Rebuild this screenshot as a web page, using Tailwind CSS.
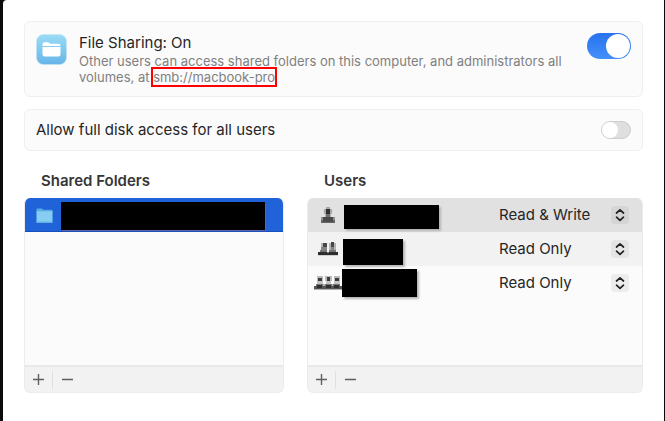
<!DOCTYPE html>
<html lang="en">

<head>
    <meta charset="UTF-8">
    <meta name="viewport" content="width=device-width, initial-scale=1.0">
    <title>File Sharing</title>
    <script src="https://cdn.jsdelivr.net/npm/@tailwindcss/browser@4"></script>
</head>

<body class="bg-[#0b0b0b] font-['Inter',sans-serif] text-[15px] leading-5 text-[#262626]">
    <main class="min-h-screen ml-[3px] mr-px px-[21px] pt-[21px] pb-7 bg-white rounded-tl-sm">
        <!-- File sharing switch -->
        <section class="flex items-start px-[11px] pt-[11px] pb-2 h-[76px] bg-[#fbfbfb] border border-[#efefef] rounded-md">
            <svg class="w-[31px] h-[31px] mt-px shrink-0" viewBox="0 0 31 31" aria-hidden="true">
                <defs>
                    <linearGradient id="tile" x1="0" y1="0" x2="0" y2="1">
                        <stop offset="0" stop-color="#9adcf6" />
                        <stop offset="1" stop-color="#66b5e8" />
                    </linearGradient>
                </defs>
                <rect x=".5" y=".5" width="30" height="30" rx="7" fill="url(#tile)" stroke="#c4e4f4" stroke-width=".6" />
                <path d="M6.500 12V10q0-1.800 1.800-1.800h3.400q.8 0 1.400.5l.8.7q.4.300 1 .300h7.800q1.800 0 1.800 1.800V12z" fill="#fff" />
                <path d="M6.500 13h18v7.500q0 2-2 2h-14q-2 0-2-2z" fill="#fff" />
            </svg>
            <div class="ml-3 flex-1">
                <label for="fileSharing" class="block">File Sharing: On</label>
                <p class="max-w-[490px] text-[13px] leading-4 text-[#808080]">Other users can access shared folders on this computer, and administrators all volumes, at <span class="outline-2 outline-[#ff0000]">smb://macbook-pro</span></p>
            </div>
            <input type="checkbox" id="fileSharing" checked
                class="appearance-none flex shrink-0 w-11 h-[26px] p-px rounded-full bg-linear-to-b from-[#2872ee] to-[#4390f9] justify-end before:size-6 before:rounded-full before:bg-white">
        </section>

        <!-- Full disk access -->
        <section class="flex items-center justify-between mt-3 px-[11px] h-[42px] bg-[#fbfbfb] border border-[#efefef] rounded-md">
            <label for="diskAccess">Allow full disk access for all users</label>
            <input type="checkbox" id="diskAccess"
                class="appearance-none flex items-center shrink-0 w-[30px] h-[18px] rounded-full bg-[#dfdfdf] border border-[#cecece] before:size-4 before:rounded-full before:bg-white">
        </section>

        <div class="grid grid-cols-[260fr_336fr] gap-x-[23px] mt-5">
            <!-- Shared folders -->
            <section>
                <h2 class="pl-[17px] font-semibold text-[#363636]">Shared Folders</h2>
                <div class="mt-[7px] bg-[#fbfbfb] rounded-md overflow-hidden border border-[#ececec] border-t-0">
                    <ul class="-mx-px h-[167px]">
                        <li class="flex items-center h-[34px] pl-3 bg-[#2062d8] inset-shadow-[0_-1px_0_#154fbd]">
                            <svg class="w-[17px] h-[17px]" viewBox="0 0 17 17" aria-hidden="true">
                                <path d="M.5 2.500q0-1 1-1h4q.6 0 1 .5l.6.700h8.400q1 0 1 1V6H.5z" fill="#56ade0" />
                                <rect x=".5" y="4.200" width="16" height="11.800" rx=".8" fill="#85cdf3" />
                                <path d="M.5 14.500h16V15q0 1-1 1h-14q-1 0-1-1z" fill="#62b3e2" />
                            </svg>
                            <span class="ml-2 mb-0.5 self-end w-[204px] h-7 bg-black shadow-[1px_1px_1px_#5c5faa]"></span>
                        </li>
                    </ul>
                    <div class="flex items-center h-[27px] bg-[#f2f2f2] border-t-2 border-[#e9e9e9]">
                        <button type="button" aria-label="Add folder" class="flex justify-center w-[27px]">
                            <svg class="w-[11px] h-[11px]" viewBox="0 0 11 11" stroke="#5f5f5f" stroke-width="1.400"><path d="M5.500 0v11M0 5.500h11" /></svg>
                        </button>
                        <span class="w-px h-[18px] bg-[#e0e0e0]"></span>
                        <button type="button" aria-label="Remove folder" class="flex justify-center w-7">
                            <svg class="w-[11px] h-[11px]" viewBox="0 0 11 11" stroke="#5f5f5f" stroke-width="1.400"><path d="M0 5.500h11" /></svg>
                        </button>
                    </div>
                </div>
            </section>

            <!-- Users -->
            <section>
                <h2 class="pl-[17px] font-semibold text-[#363636]">Users</h2>
                <div class="mt-[7px] bg-[#fbfbfb] rounded-md overflow-hidden border border-[#ececec] border-t-0">
                    <ul class="-mx-px h-[167px]">
                        <li class="flex items-center h-[34px] pl-[7px] pr-[14px] bg-[#e1e1e1]">
                            <svg class="w-7 h-4 shrink-0" viewBox="0 0 28 16" shape-rendering="crispEdges" aria-hidden="true">
                                <path d="M12 0h4v2h-4z" fill="#aaa" />
                                <path d="M10 2h8v5h-8z" fill="#a6a6a6" />
                                <path d="M12 2h4v5h-4z" fill="#303030" />
                                <path d="M11 7h6v3h-6z" fill="#b4b4b4" />
                                <path d="M12 7h4v3h-4z" fill="#6c6c6c" />
                                <path d="M7 10h14v3H7z" fill="#929292" />
                                <path d="M9 10h10v3H9z" fill="#484848" />
                                <path d="M7 13h14v3H7z" fill="#666" />
                                <path d="M9 13h10v2H9z" fill="#4c4c4c" />
                            </svg>
                            <span class="ml-0.5 mb-[3px] self-end w-[95px] h-6 bg-black shadow-[2px_2px_2px_#b5b5b5]"></span>
                            <div class="relative ml-auto w-[130px]">
                                <select aria-label="First user access" class="appearance-none block w-full outline-none">
                                    <option>Read &amp; Write</option>
                                    <option>Read Only</option>
                                </select>
                                <svg class="absolute right-0 top-px w-[18px] h-[18px] rounded-sm bg-[#d5d5d5] pointer-events-none" viewBox="0 0 18 18" fill="none" stroke="#222" stroke-width="1.700" stroke-linecap="round" stroke-linejoin="round"><path d="M5.500 7 9 3.800 12.500 7M5.500 11.200 9 14.400l3.500-3.200" /></svg>
                            </div>
                        </li>
                        <li class="flex items-center h-[34px] pl-[7px] pr-[14px] bg-[#f2f2f2]">
                            <svg class="w-7 h-4 shrink-0" viewBox="0 0 28 16" shape-rendering="crispEdges" aria-hidden="true">
                                <path d="M7 2h6v8H7zM15 2h7v8h-7z" fill="#b4b4b4" />
                                <path d="M9 2h4v4H9zM17 1h3v5h-3z" fill="#484848" />
                                <path d="M7 6h6v3H7zM17 6h3v3h-3z" fill="#848484" />
                                <path d="M6 9h7v2H6zM15 9h7v2h-7z" fill="#777" />
                                <path d="M4 11h20v3H4z" fill="#2d2d2d" />
                                <path d="M13 11h2v1h-2z" fill="#888" />
                                <path d="M4 14h20v1H4z" fill="#d0d0d0" />
                            </svg>
                            <span class="ml-px mb-px self-end w-[60px] h-[26px] bg-black shadow-[2px_2px_2px_#b5b5b5]"></span>
                            <div class="relative ml-auto w-[130px]">
                                <select aria-label="Second user access" class="appearance-none block w-full outline-none">
                                    <option>Read Only</option>
                                    <option>Read &amp; Write</option>
                                </select>
                                <svg class="absolute right-0 top-px w-[18px] h-[18px] rounded-sm bg-[#e5e5e5] pointer-events-none" viewBox="0 0 18 18" fill="none" stroke="#222" stroke-width="1.700" stroke-linecap="round" stroke-linejoin="round"><path d="M5.500 7 9 3.800 12.500 7M5.500 11.200 9 14.400l3.500-3.200" /></svg>
                            </div>
                        </li>
                        <li class="flex items-center h-[34px] pl-[7px] pr-[14px]">
                            <svg class="w-7 h-4 shrink-0" viewBox="0 0 28 16" shape-rendering="crispEdges" aria-hidden="true">
                                <path d="M3 1h6v5H3zM11 1h7v5h-7zM20 1h6v5h-6z" fill="#bcbcbc" />
                                <path d="M4 3h4v3H4zM13 2h3v4h-3zM21 3h4v3h-4z" fill="#3c3c3c" />
                                <path d="M3 6h6v3H3zM12 6h5v3h-5zM20 6h6v3h-6z" fill="#c4c4c4" />
                                <path d="M2 9h24v2H2z" fill="#777" />
                                <path d="M0 11h28v3H0z" fill="#555" />
                                <path d="M3 10h5v3H3zM12 10h5v3h-5zM20 10h5v3h-5z" fill="#303030" />
                                <path d="M0 14h28v1H0zM9 9h2v2H9zM18 9h1v2h-1z" fill="#b0b0b0" />
                            </svg>
                            <span class="w-[75px] h-7 bg-black shadow-[2px_2px_2px_#b5b5b5]"></span>
                            <div class="relative ml-auto w-[130px]">
                                <select aria-label="Third user access" class="appearance-none block w-full outline-none">
                                    <option>Read Only</option>
                                    <option>Read &amp; Write</option>
                                </select>
                                <svg class="absolute right-0 top-px w-[18px] h-[18px] rounded-sm bg-[#ededed] pointer-events-none" viewBox="0 0 18 18" fill="none" stroke="#222" stroke-width="1.700" stroke-linecap="round" stroke-linejoin="round"><path d="M5.500 7 9 3.800 12.500 7M5.500 11.200 9 14.400l3.500-3.200" /></svg>
                            </div>
                        </li>
                    </ul>
                    <div class="flex items-center h-[27px] bg-[#f2f2f2] border-t-2 border-[#e9e9e9]">
                        <button type="button" aria-label="Add user" class="flex justify-center w-[27px]">
                            <svg class="w-[11px] h-[11px]" viewBox="0 0 11 11" stroke="#5f5f5f" stroke-width="1.400"><path d="M5.500 0v11M0 5.500h11" /></svg>
                        </button>
                        <span class="w-px h-[18px] bg-[#e0e0e0]"></span>
                        <button type="button" aria-label="Remove user" class="flex justify-center w-7">
                            <svg class="w-[11px] h-[11px]" viewBox="0 0 11 11" stroke="#5f5f5f" stroke-width="1.400"><path d="M0 5.500h11" /></svg>
                        </button>
                    </div>
                </div>
            </section>
        </div>
    </main>
</body>

</html>
